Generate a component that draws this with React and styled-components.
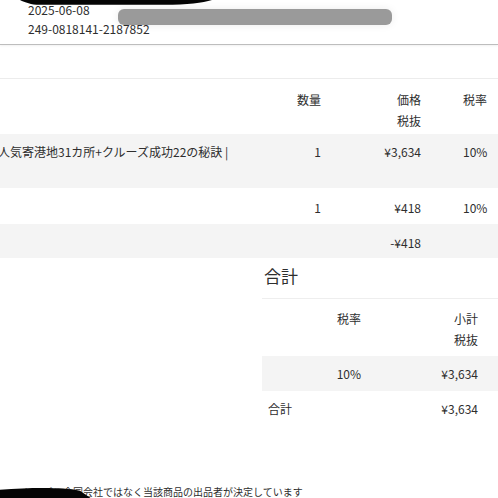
import styled, { createGlobalStyle } from 'styled-components';

const GlobalStyle = createGlobalStyle`
  body {
    margin: 0;
    background: #fff;
    color: #2e2e2e;
    font-family: "Noto Sans CJK JP", "Noto Sans", sans-serif;
    font-size: 12px;
  }
`;

const items = [
  { name: '人気寄港地31カ所+クルーズ成功22の秘訣 |', qty: '1', price: '¥3,634', rate: '10%', shaded: true, tall: true },
  { name: '', qty: '1', price: '¥418', rate: '10%' },
  { name: '', qty: '', price: '-¥418', rate: '', shaded: true },
];

const App = () => {
  return (
    <Page>
      <GlobalStyle />
      <OrderInfo>
        <p>2025-06-08</p>
        <p>249-0818141-2187852</p>
        {/* redactions over the photo */}
        <Blob viewBox="0 0 200 10" preserveAspectRatio="none">
          <path d="M0 0 L200 0 C190 5 175 8 150 8 L20 8 C12 8 5 4 0 0 Z" fill="#050505" />
        </Blob>
        <GreyBar />
      </OrderInfo>

      <Band />

      <ItemTable>
        <Row $header>
          <Cell />
          <Cell $align="right">数量</Cell>
          <Cell $align="right">
            価格
            <br />
            税抜
          </Cell>
          <Cell $align="left">税率</Cell>
        </Row>
        {items.map((item, idx) => (
          <Row key={idx} $shaded={item.shaded} $tall={item.tall} $last={idx === items.length - 1}>
            <Desc>{item.name}</Desc>
            <Cell $align="right">{item.qty}</Cell>
            <Cell $align="right">{item.price}</Cell>
            <Cell $align="left">{item.rate}</Cell>
          </Row>
        ))}
      </ItemTable>

      <Totals>
        <TotalsTitle>合計</TotalsTitle>
        <TotalsRow $header>
          <span />
          <TCell>税率</TCell>
          <TCell>
            小計
            <br />
            税抜
          </TCell>
        </TotalsRow>
        <TotalsRow $shaded>
          <span />
          <TCell>10%</TCell>
          <TCell>¥3,634</TCell>
        </TotalsRow>
        <TotalsRow>
          <Label>合計</Label>
          <TCell>¥3,634</TCell>
        </TotalsRow>
      </Totals>

      <Footnote>
        ジャパン合同会社ではなく当該商品の出品者が決定しています
        <FootBlob viewBox="0 0 100 14" preserveAspectRatio="none">
          <path d="M0 4 C30 2 60 1 80 5 L92 14 L0 14 Z" fill="#050505" />
        </FootBlob>
      </Footnote>
    </Page>
  );
};

const Page = styled.div`
  width: 498px;
  height: 498px;
  overflow: hidden;
`;

const OrderInfo = styled.div`
  position: relative;
  padding: 0 0 6px 28px;
  border-bottom: 1px solid #bdbdbd;
  box-shadow: 0 1px 2px rgba(0, 0, 0, 0.06);

  p {
    margin: 0;
    line-height: 19px;
  }
`;

const Blob = styled.svg`
  position: absolute;
  left: 20px;
  top: 0;
  width: 192px;
  height: 6px;
`;

const GreyBar = styled.div`
  position: absolute;
  left: 118px;
  top: 9px;
  width: 274px;
  height: 16px;
  border-radius: 6px;
  background: #9a9a9a;
  box-shadow: 0 0 8px rgba(0, 0, 0, 0.08);
`;

const Band = styled.div`
  height: 33px;
  border-bottom: 1px solid #ececec;
`;

const ItemTable = styled.div`
  display: flex;
  flex-direction: column;
`;

const Row = styled.div`
  display: grid;
  grid-template-columns: 1fr 80px 100px 56px;
  line-height: 21px;
  background: ${(p) => (p.$shaded ? '#f4f4f4' : '#fff')};
  padding: ${(p) => (p.$header ? '10px 0 3px' : '9px 0 6px')};
  min-height: ${(p) => (p.$tall ? '39px' : '21px')};
  ${(p) => p.$tall && 'padding: 7px 0 8px;'}
  ${(p) => p.$last && 'padding: 8px 0 5px;'}
`;

const Cell = styled.div`
  text-align: ${(p) => p.$align};
  padding: ${(p) => (p.$align === 'right' ? '0 21px 0 0' : '0 0 0 21px')};
  white-space: nowrap;
`;

const Desc = styled.div`
  white-space: nowrap;
  text-indent: -2px;
  overflow: hidden;
`;

const Totals = styled.div`
  margin-left: 262px;
  display: flex;
  flex-direction: column;
`;

const TotalsTitle = styled.h2`
  margin: 6px 0 0;
  padding: 0 0 10px 2px;
  font-size: 17px;
  font-weight: normal;
  line-height: 24px;
  border-bottom: 1px solid #eeeeee;
`;

const TotalsRow = styled.div`
  display: grid;
  grid-template-columns: 19px 100px 1fr;
  line-height: 21px;
  padding: ${(p) => (p.$header ? '9px 0 6px' : '7px 0 7px')};
  background: ${(p) => (p.$shaded ? '#f4f4f4' : '#fff')};
`;

const TCell = styled.div`
  text-align: right;
  padding-right: 20px;
`;

const Label = styled.div`
  grid-column: span 2;
  padding-left: 6px;
`;

const Footnote = styled.p`
  position: relative;
  margin: 59px 0 0 23px;
  font-size: 10px;
  line-height: 14px;
  white-space: nowrap;
`;

const FootBlob = styled.svg`
  position: absolute;
  left: -23px;
  top: 1px;
  width: 100px;
  height: 13px;
`;

export default App;
